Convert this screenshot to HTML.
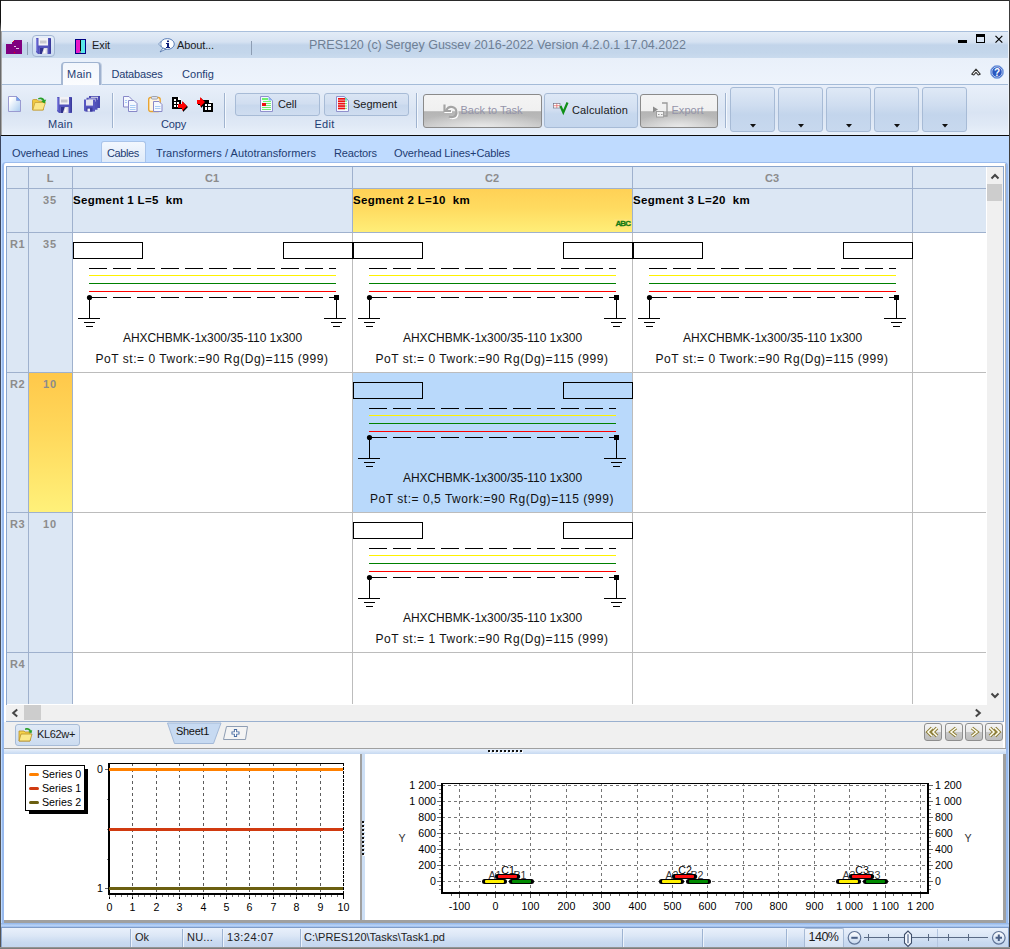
<!DOCTYPE html>
<html><head><meta charset="utf-8"><title>PRES120</title>
<style>
html,body{margin:0;padding:0;background:#fff;}
body{width:1010px;height:949px;position:relative;overflow:hidden;font-family:"Liberation Sans",sans-serif;}
.t{position:absolute;white-space:pre;font-family:"Liberation Sans",sans-serif;}
svg{position:absolute;overflow:visible;}
</style></head><body>
<div style="position:absolute;left:0px;top:0px;width:1010px;height:949px;background:#fff;"></div><div style="position:absolute;left:1px;top:31px;width:1008px;height:27px;background:linear-gradient(#e3ecf7 0%,#d6e2f2 38%,#c2d4ea 50%,#c3d6eb 80%,#cadbee 100%);border-top:1px solid #a9bfdc;box-sizing:border-box;"></div><div style="position:absolute;left:1px;top:58px;width:1008px;height:27px;background:linear-gradient(#e9f0fa,#eef4fc);"></div><div style="position:absolute;left:1px;top:85px;width:1008px;height:50px;background:linear-gradient(#e8effa 0%,#e1eaf6 30%,#d9e4f3 55%,#e0e9f6 80%,#e9f1fb 100%);"></div><div style="position:absolute;left:1px;top:84px;width:1008px;height:1px;background:#a4bbd8;"></div><div style="position:absolute;left:1px;top:135px;width:1008px;height:1px;background:#0c0c0c;"></div><div style="position:absolute;left:1px;top:136px;width:1008px;height:789px;background:#bfdbff;"></div><div style="position:absolute;left:0px;top:0px;width:1010px;height:1px;background:#2a2a2a;"></div><div style="position:absolute;left:0px;top:0px;width:1px;height:949px;background:linear-gradient(#111 0px,#111 22px,#6a6a6a 30px,#6a6a6a 135px,#3a4560 136px,#555 100%);"></div><div style="position:absolute;left:1px;top:31px;width:1px;height:104px;background:#a8a8a8;"></div><div style="position:absolute;left:1009px;top:0px;width:1px;height:949px;background:#3c3c3c;"></div><div style="position:absolute;left:1008px;top:31px;width:1px;height:104px;background:#eef3fa;"></div><svg style="left:6px;top:39px" width="17" height="16" viewBox="0 0 17 16" shape-rendering="crispEdges"><path d="M0 5h6V3l2-2h8v14H0z" fill="#800080"/><rect x="8" y="7" width="2" height="1" fill="#e8c8e8"/><rect x="10" y="9" width="3" height="1" fill="#e8c8e8"/><rect x="7" y="2" width="1" height="1" fill="#f00"/><rect x="8" y="13" width="1" height="1" fill="#f00"/></svg><div style="position:absolute;left:27px;top:42px;width:1px;height:13px;background:#8d9db3;"></div><div style="position:absolute;left:32px;top:35px;width:23px;height:22px;border:1px solid #a3b6d2;border-radius:4px;box-sizing:border-box;background:linear-gradient(#e6eefa,#c9daf0);"></div><svg style="left:36px;top:38px" width="15.0" height="16.0" viewBox="0 0 15 16"><path d="M0.800 0h13.400q.8 0 .8 .8v14.400q0 .8-.8 .8H2l-2-2V.8q0-.8 .8-.8z" fill="#5252bc"/><path d="M0 1h1.300v13l-1.300-1.300z" fill="#8484e0"/><path d="M13.500 0.500h1.500v15h-1.500z" fill="#3a3a9c"/><rect x="2.500" y="0" width="9.500" height="7.500" fill="#f2f2f6"/><rect x="4" y="2.500" width="6.500" height="3" fill="#c8c8d0"/><rect x="3.800" y="10" width="7.700" height="6" fill="#dcdce6"/><path d="M3.800 10h4l-2 6h-2z" fill="#30308c"/><path d="M8.800 10.800l-1.600 4.400h2.300v-4.400z" fill="#fff"/></svg><svg style="left:75px;top:39px" width="11" height="15" viewBox="0 0 11 15" shape-rendering="crispEdges"><rect x="0" y="0" width="11" height="15" fill="#000080"/><rect x="1" y="1" width="4" height="13" fill="#e818c8"/><rect x="6" y="1" width="4" height="13" fill="#58e8e8"/><rect x="5" y="1" width="1" height="13" fill="#000"/><path d="M3 14l3-3v3z" fill="#888"/></svg><span class="t" style="left:92.00px;top:38.00px;font-size:11px;line-height:15px;color:#1a1a1a;letter-spacing:-0.086px;">Exit</span><svg style="left:158px;top:38px" width="17" height="15" viewBox="0 0 17 15"><ellipse cx="9.300" cy="6" rx="7" ry="5.400" fill="#fff" stroke="#5a7eb8" stroke-width="1"/><path d="M5 10l-3 4 6-3z" fill="#fff" stroke="#4a6ea8" stroke-width="0.8"/><path d="M0.5 6l2.5-2.5v5z" fill="#dfe8f5" stroke="#4a6ea8" stroke-width="0.6"/><rect x="9" y="2.5" width="2" height="1.6" fill="#10207a"/><path d="M8 5h3v4h1v1H8V9h1V6H8z" fill="#10207a"/></svg><span class="t" style="left:177.00px;top:38.00px;font-size:11px;line-height:15px;color:#1a1a1a;letter-spacing:-0.115px;">About...</span><div style="position:absolute;left:251px;top:41px;width:1px;height:14px;background:#8d9db3;"></div><span class="t" style="left:309.00px;top:36.75px;font-size:12.5px;line-height:16.5px;color:#6e7f95;letter-spacing:-0.017px;">PRES120 (c) Sergey Gussev 2016-2022 Version 4.2.0.1 17.04.2022</span><div style="position:absolute;left:958px;top:40px;width:9px;height:3px;background:#000;"></div><div style="position:absolute;left:976px;top:34px;width:9px;height:9px;border:1px solid #000;border-top:3px solid #000;box-sizing:border-box;"></div><svg style="left:995px;top:35px" width="8" height="8" viewBox="0 0 8 8"><path d="M0.500 0.800l6.800 6.800M7.300 0.800l-6.800 6.800" stroke="#000" stroke-width="1.150"/></svg><div style="position:absolute;left:61px;top:62px;width:40px;height:23px;border:1px solid #9fb3d0;border-left:2px solid #a6b8d3;border-right:2px solid #a0b2cf;border-bottom:none;border-radius:4px 4px 0 0;box-sizing:border-box;background:linear-gradient(#f2f6fc,#fbfcfe);box-shadow:1px 0 0 #c5d2e5;"></div><span class="t" style="left:67.00px;top:66.50px;font-size:11px;line-height:15px;color:#1e3c72;letter-spacing:0.289px;">Main</span><span class="t" style="left:111.50px;top:66.50px;font-size:11px;line-height:15px;color:#1e3c72;letter-spacing:-0.177px;">Databases</span><span class="t" style="left:182.00px;top:66.50px;font-size:11px;line-height:15px;color:#1e3c72;letter-spacing:0.034px;">Config</span><svg style="left:971px;top:68px" width="10" height="8" viewBox="0 0 10 8"><path d="M0.8 6.2L5 1.2L9.2 6.2L7.2 7L5 4.3L2.8 7Z" fill="#fff" stroke="#333" stroke-width="1.1" stroke-linejoin="round"/></svg><svg style="left:990px;top:65px" width="14" height="14" viewBox="0 0 14 14"><circle cx="7" cy="7" r="6.5" fill="#2a58c0" stroke="#8fb0e8" stroke-width="1"/><circle cx="7" cy="7" r="5.2" fill="none" stroke="#e8f0ff" stroke-width="0.7"/><text x="7" y="10.6" font-size="10" font-weight="bold" text-anchor="middle" fill="#fff" font-family="Liberation Sans">?</text></svg><div style="position:absolute;left:112px;top:93px;width:1px;height:35px;background:#9fb3cf;box-shadow:1px 0 0 #f4f8fd;"></div><div style="position:absolute;left:224px;top:93px;width:1px;height:35px;background:#9fb3cf;box-shadow:1px 0 0 #f4f8fd;"></div><div style="position:absolute;left:416px;top:93px;width:1px;height:35px;background:#9fb3cf;box-shadow:1px 0 0 #f4f8fd;"></div><div style="position:absolute;left:725px;top:93px;width:1px;height:35px;background:#9fb3cf;box-shadow:1px 0 0 #f4f8fd;"></div><svg style="left:8px;top:96px" width="13" height="16" viewBox="0 0 13 16"><defs><linearGradient id="dg" x1="0" y1="0" x2="1" y2="1"><stop offset="0.2" stop-color="#ffffff"/><stop offset="1" stop-color="#a9cbf0"/></linearGradient></defs><path d="M0.5 0.5h8l4 4v11h-12z" fill="url(#dg)" stroke="#9a9ad0"/><path d="M8.5 0.5v4h4z" fill="#6aa8f0" stroke="#8a8ad0" stroke-width="0.6"/></svg><svg style="left:32px;top:96px" width="15" height="15" viewBox="0 0 15 15"><path d="M0.5 4.5q0-1 1-1h3.5l1.5 1.5h5v9h-11z" fill="#f0c840" stroke="#c09a30" stroke-width="0.8"/><path d="M0.8 14l2.2-7.5h10.5l-2.5 7.5z" fill="#fbe788" stroke="#c8a238" stroke-width="0.8"/><path d="M6 2.2c3-1.6 5.6-.6 6.6 1.8l1.6-.4-1.6 4-3.4-2.4 1.5-.5c-.9-1.5-2.6-1.9-4.2-1.2z" fill="#28a028"/></svg><svg style="left:57px;top:96.5px" width="15.0" height="16.0" viewBox="0 0 15 16"><path d="M0.800 0h13.400q.8 0 .8 .8v14.400q0 .8-.8 .8H2l-2-2V.8q0-.8 .8-.8z" fill="#5252bc"/><path d="M0 1h1.300v13l-1.300-1.300z" fill="#8484e0"/><path d="M13.500 0.500h1.500v15h-1.500z" fill="#3a3a9c"/><rect x="2.500" y="0" width="9.500" height="7.500" fill="#f2f2f6"/><rect x="4" y="2.500" width="6.500" height="3" fill="#c8c8d0"/><rect x="3.800" y="10" width="7.700" height="6" fill="#dcdce6"/><path d="M3.800 10h4l-2 6h-2z" fill="#30308c"/><path d="M8.800 10.800l-1.600 4.400h2.300v-4.400z" fill="#fff"/></svg><svg style="left:84px;top:96px" width="16" height="16" viewBox="0 0 16 16"><g transform="translate(5,0)"><path d="M0 0h11v12H1l-1-1z" fill="#4848b0"/><rect x="2" y="0.8" width="7" height="3" fill="#e4e4ee"/></g><g transform="translate(2.5,1.8)"><path d="M0 0h11v12H1l-1-1z" fill="#5050b8"/><rect x="2" y="0.8" width="7" height="3" fill="#e4e4ee"/></g><g transform="translate(0,3.6)"><path d="M0 0h11v12H1l-1-1z" fill="#5656c0"/><rect x="2" y="0" width="7" height="6" fill="#e4e4ee"/><rect x="2.5" y="8" width="6" height="4" fill="#38389a"/><rect x="3.5" y="9" width="2.5" height="3" fill="#f0f0f8"/></g></svg><span class="t" style="left:48.00px;top:117.00px;font-size:11px;line-height:15px;color:#1e3c72;letter-spacing:0.289px;">Main</span><svg style="left:123px;top:96px" width="15" height="16" viewBox="0 0 15 16"><path d="M0.5 0.5h5.5l3 3v7.5h-8.500z" fill="#f4f8ff" stroke="#8888c8"/><path d="M5.5 4.500h5.500l3 3v8h-8.500z" fill="#f4f8ff" stroke="#8888c8"/><path d="M7 9.5h5.500M7 11.500h5.500M7 13.500h5.500" stroke="#a8ccf4" stroke-width="1.2"/><path d="M2 4.500h2M2 6.500h2" stroke="#a8ccf4" stroke-width="1.2"/></svg><svg style="left:148px;top:96px" width="15" height="16" viewBox="0 0 15 16"><rect x="0.7" y="1.500" width="11.500" height="14" rx="2" fill="#fff6e0" stroke="#e8a432" stroke-width="1.4"/><rect x="3.500" y="0.5" width="6" height="2.600" rx="1" fill="#e0e4ee" stroke="#8a93a8" stroke-width="0.8"/><path d="M5.500 5.500h5.500l3 3v7h-8.500z" fill="#f4f8ff" stroke="#8888c8"/><path d="M7 10.500h5.500M7 12.500h5.500" stroke="#a8ccf4" stroke-width="1.2"/></svg><svg style="left:172px;top:97px" width="17" height="15" viewBox="0 0 17 15" shape-rendering="crispEdges"><path d="M0 0h6l3 3v9H0z" fill="#000"/><path d="M6 0v3h3" fill="#fff"/><rect x="2" y="2" width="2" height="2" fill="#fff"/><rect x="2" y="5" width="2" height="2" fill="#fff"/><rect x="5" y="5" width="2" height="2" fill="#fff"/><rect x="2" y="8" width="2" height="2" fill="#fff"/><rect x="5" y="8" width="2" height="2" fill="#fff"/><path d="M7 8h4V5l5 5-5 5v-3H7z" fill="#000" shape-rendering="auto"/><path d="M6 7h4V4l5 5-5 5v-3H6z" fill="#ff0000" shape-rendering="auto"/></svg><svg style="left:197px;top:97px" width="17" height="15" viewBox="0 0 17 15" shape-rendering="crispEdges"><path d="M1 4h3V1l5 5-5 5V8H1z" fill="#000" shape-rendering="auto"/><path d="M6 3h6l4 3.500V15H6z" fill="#000"/><path d="M0 3h3V0l5 5-5 5V7H0z" fill="#ff0000" shape-rendering="auto"/><path d="M12 3v3h3" fill="#fff"/><rect x="8" y="7" width="2" height="2" fill="#fff"/><rect x="11" y="7" width="3" height="2" fill="#fff"/><rect x="8" y="10" width="2" height="3" fill="#fff"/><rect x="11" y="10" width="3" height="3" fill="#fff"/></svg><span class="t" style="left:161.00px;top:117.00px;font-size:11px;line-height:15px;color:#1e3c72;letter-spacing:-0.172px;">Copy</span><div style="position:absolute;left:235px;top:93px;width:85px;height:23px;border:1px solid #a7bbd6;border-radius:3px;box-sizing:border-box;background:linear-gradient(#dae5f4 0%,#d1def0 45%,#c8d8ed 55%,#cfddf0 100%);"></div><div style="position:absolute;left:324px;top:93px;width:85px;height:23px;border:1px solid #a7bbd6;border-radius:3px;box-sizing:border-box;background:linear-gradient(#dae5f4 0%,#d1def0 45%,#c8d8ed 55%,#cfddf0 100%);"></div><svg style="left:260px;top:96px" width="13" height="16" viewBox="0 0 13 16" shape-rendering="crispEdges"><path d="M0.5 0.5h8l4 4v11h-12z" fill="#f4f8ff" stroke="#9090cc" shape-rendering="auto"/><path d="M8.5 0.5v4h4z" fill="#8ab8f0" shape-rendering="auto"/><rect x="2" y="2" width="6" height="2" fill="#70f070"/><rect x="3" y="5" width="8" height="1" fill="#70f070"/><rect x="2" y="7" width="4" height="3" fill="#ee1010"/><rect x="6" y="7" width="5" height="1" fill="#70f070"/><rect x="6" y="9" width="5" height="1" fill="#70f070"/><rect x="2" y="11" width="9" height="1" fill="#70f070"/><rect x="2" y="13" width="9" height="1" fill="#70f070"/></svg><span class="t" style="left:278.00px;top:96.50px;font-size:11px;line-height:15px;color:#1a1a1a;letter-spacing:-0.113px;">Cell</span><svg style="left:336px;top:96px" width="13" height="16" viewBox="0 0 13 16" shape-rendering="crispEdges"><path d="M0.5 0.5h8l4 4v11h-12z" fill="#f4f8ff" stroke="#9090cc" shape-rendering="auto"/><path d="M8.5 0.5v4h4z" fill="#8ab8f0" shape-rendering="auto"/><rect x="2" y="2.0" width="7" height="1.700" fill="#ee1010" shape-rendering="auto"/><rect x="9" y="2.3" width="2" height="1" fill="#70f070" shape-rendering="auto"/><rect x="2" y="4.4" width="7" height="1.700" fill="#ee1010" shape-rendering="auto"/><rect x="9" y="4.699999999999999" width="2" height="1" fill="#70f070" shape-rendering="auto"/><rect x="2" y="6.8" width="7" height="1.700" fill="#ee1010" shape-rendering="auto"/><rect x="9" y="7.1" width="2" height="1" fill="#70f070" shape-rendering="auto"/><rect x="2" y="9.2" width="7" height="1.700" fill="#ee1010" shape-rendering="auto"/><rect x="9" y="9.5" width="2" height="1" fill="#70f070" shape-rendering="auto"/><rect x="2" y="11.6" width="7" height="1.700" fill="#ee1010" shape-rendering="auto"/><rect x="9" y="11.899999999999999" width="2" height="1" fill="#70f070" shape-rendering="auto"/></svg><span class="t" style="left:353.00px;top:96.50px;font-size:11px;line-height:15px;color:#1a1a1a;">Segment</span><span class="t" style="left:314.50px;top:117.00px;font-size:11px;line-height:15px;color:#1e3c72;letter-spacing:0.258px;">Edit</span><div style="position:absolute;left:423px;top:94px;width:119px;height:34px;border:1px solid #8a8a8a;border-radius:3px;box-sizing:border-box;background:radial-gradient(ellipse 60% 45% at 50% 100%,rgba(235,235,235,.95),rgba(235,235,235,0) 100%),linear-gradient(#f4f4f4 0%,#f0f0f0 50%,#b4b4b4 52%,#bcbcbc 80%,#c6c6c6 100%);"></div><div style="position:absolute;left:544px;top:93px;width:94px;height:35px;border:1px solid #a7bbd6;border-radius:3px;box-sizing:border-box;background:linear-gradient(#dde8f6 0%,#d2dff1 48%,#c7d8ee 60%,#c4d6ed 100%);"></div><div style="position:absolute;left:640px;top:94px;width:78px;height:34px;border:1px solid #8a8a8a;border-radius:3px;box-sizing:border-box;background:radial-gradient(ellipse 60% 45% at 50% 100%,rgba(235,235,235,.95),rgba(235,235,235,0) 100%),linear-gradient(#f4f4f4 0%,#f0f0f0 50%,#b4b4b4 52%,#bcbcbc 80%,#c6c6c6 100%);"></div><svg style="left:443px;top:104px" width="16" height="15" viewBox="0 0 16 15"><g transform="translate(1,1)"><path d="M1.500 0.500v6.500h6.500" fill="none" stroke="#fff" stroke-width="2.2"/><path d="M3 6.500c3-6 11-4 10.500 2.500-.5 4-4.500 5-7.500 3.500" fill="none" stroke="#fff" stroke-width="2.200"/></g><path d="M1.500 0.500v6.500h6.500" fill="none" stroke="#a4a4a4" stroke-width="2.200"/><path d="M3 6.500c3-6 11-4 10.500 2.500-.5 4-4.500 5-7.500 3.500" fill="none" stroke="#a4a4a4" stroke-width="2.200"/></svg><span class="t" style="left:460.50px;top:102.50px;font-size:11px;line-height:15px;color:#9494aa;letter-spacing:-0.014px;">Back to Task</span><svg style="left:553px;top:102px" width="17" height="12" viewBox="0 0 17 12"><rect x="0.500" y="1.500" width="6.500" height="4.500" fill="#fff" stroke="#667" stroke-width="0.600"/><path d="M0.500 3.700h6.500M3.800 1.500v4.500" stroke="#d44" stroke-width="0.600"/><path d="M7.500 4l2.800 6.500L14.500 0.500" fill="none" stroke="#109018" stroke-width="2.200"/></svg><span class="t" style="left:572.00px;top:102.50px;font-size:11px;line-height:15px;color:#1a1a1a;letter-spacing:0.143px;">Calculation</span><svg style="left:652px;top:102px" width="17" height="16" viewBox="0 0 17 16"><path d="M10 1h5v13h-3" fill="none" stroke="#9a9a9a" stroke-width="1.300"/><path d="M1 4.500l5 3-5 3z" fill="#8c8c8c"/><rect x="4.500" y="9.500" width="7" height="5.500" fill="#f2f2f2" stroke="#9a9a9a" stroke-width="0.900"/><path d="M6 12.500h1.500M9 12.500h1.500" stroke="#9a9a9a"/></svg><span class="t" style="left:671.50px;top:102.50px;font-size:11px;line-height:15px;color:#9494aa;letter-spacing:0.034px;">Export</span><div style="position:absolute;left:730px;top:87px;width:45px;height:45px;border:1px solid #a7bbd6;border-radius:3px;box-sizing:border-box;background:linear-gradient(#dfe9f6 0%,#cfddf0 40%,#c3d5ec 62%,#c7d8ee 100%);"></div><svg style="left:749.5px;top:123.500px" width="6" height="3.500" viewBox="0 0 6 3.500"><path d="M0 0h6L3 3.500z" fill="#111"/></svg><div style="position:absolute;left:778px;top:87px;width:45px;height:45px;border:1px solid #a7bbd6;border-radius:3px;box-sizing:border-box;background:linear-gradient(#dfe9f6 0%,#cfddf0 40%,#c3d5ec 62%,#c7d8ee 100%);"></div><svg style="left:797.5px;top:123.500px" width="6" height="3.500" viewBox="0 0 6 3.500"><path d="M0 0h6L3 3.500z" fill="#111"/></svg><div style="position:absolute;left:826px;top:87px;width:45px;height:45px;border:1px solid #a7bbd6;border-radius:3px;box-sizing:border-box;background:linear-gradient(#dfe9f6 0%,#cfddf0 40%,#c3d5ec 62%,#c7d8ee 100%);"></div><svg style="left:845.5px;top:123.500px" width="6" height="3.500" viewBox="0 0 6 3.500"><path d="M0 0h6L3 3.500z" fill="#111"/></svg><div style="position:absolute;left:874px;top:87px;width:45px;height:45px;border:1px solid #a7bbd6;border-radius:3px;box-sizing:border-box;background:linear-gradient(#dfe9f6 0%,#cfddf0 40%,#c3d5ec 62%,#c7d8ee 100%);"></div><svg style="left:893.5px;top:123.500px" width="6" height="3.500" viewBox="0 0 6 3.500"><path d="M0 0h6L3 3.500z" fill="#111"/></svg><div style="position:absolute;left:922px;top:87px;width:45px;height:45px;border:1px solid #a7bbd6;border-radius:3px;box-sizing:border-box;background:linear-gradient(#dfe9f6 0%,#cfddf0 40%,#c3d5ec 62%,#c7d8ee 100%);"></div><svg style="left:941.5px;top:123.500px" width="6" height="3.500" viewBox="0 0 6 3.500"><path d="M0 0h6L3 3.500z" fill="#111"/></svg><div style="position:absolute;left:101px;top:141px;width:45px;height:23px;border:1px solid #a9c4ea;border-bottom:none;border-radius:3px 3px 0 0;box-sizing:border-box;background:linear-gradient(#f2f7fe,#dde9f8);"></div><span class="t" style="left:12.00px;top:145.50px;font-size:11px;line-height:15px;color:#1e3c72;letter-spacing:-0.119px;">Overhead Lines</span><span class="t" style="left:107.00px;top:145.50px;font-size:11px;line-height:15px;color:#1e3c72;letter-spacing:-0.375px;">Cables</span><span class="t" style="left:156.00px;top:145.50px;font-size:11px;line-height:15px;color:#1e3c72;letter-spacing:0.067px;">Transformers / Autotransformers</span><span class="t" style="left:334.00px;top:145.50px;font-size:11px;line-height:15px;color:#1e3c72;letter-spacing:-0.129px;">Reactors</span><span class="t" style="left:394.00px;top:145.50px;font-size:11px;line-height:15px;color:#1e3c72;letter-spacing:-0.111px;">Overhead Lines+Cables</span><div style="position:absolute;left:2px;top:162px;width:1006px;height:761px;background:#fff;border-radius:4px 4px 0 0;border:1px solid #9cbdee;border-left:2px solid #98baee;border-right:2px solid #98baee;border-bottom:none;box-sizing:border-box;"></div><div style="position:absolute;left:1003px;top:166px;width:1px;height:556px;background:#8aa5cc;"></div><div style="position:absolute;left:1005px;top:164px;width:1px;height:758px;background:#b4b4b4;"></div><div style="position:absolute;left:6px;top:166px;width:981px;height:539px;background:#fff;overflow:hidden;"></div><div style="position:absolute;left:6px;top:166px;width:980px;height:66px;background:#dce7f4;"></div><div style="position:absolute;left:6px;top:232px;width:66px;height:472px;background:#dce7f4;"></div><div style="position:absolute;left:353px;top:189px;width:279px;height:43px;background:linear-gradient(#ffd156 0%,#ffdb60 45%,#ffee78 100%);"></div><div style="position:absolute;left:29px;top:373px;width:43px;height:139px;background:linear-gradient(#ffc84a 0%,#ffd75a 40%,#fff17a 100%);"></div><div style="position:absolute;left:353px;top:373px;width:279px;height:139px;background:#b9d9fb;"></div><div style="position:absolute;left:6px;top:166px;width:981px;height:1px;background:#9fb1cd;"></div><div style="position:absolute;left:6px;top:188px;width:980px;height:1px;background:#9fb1cd;"></div><div style="position:absolute;left:6px;top:232px;width:980px;height:1px;background:#9fb1cd;"></div><div style="position:absolute;left:6px;top:166px;width:1px;height:538px;background:#9fb1cd;"></div><div style="position:absolute;left:28px;top:166px;width:1px;height:538px;background:#9fb1cd;"></div><div style="position:absolute;left:72px;top:166px;width:1px;height:538px;background:#9fb1cd;"></div><div style="position:absolute;left:352px;top:166px;width:1px;height:66px;background:#9fb1cd;"></div><div style="position:absolute;left:352px;top:233px;width:1px;height:471px;background:#bcbcbc;"></div><div style="position:absolute;left:632px;top:166px;width:1px;height:66px;background:#9fb1cd;"></div><div style="position:absolute;left:632px;top:233px;width:1px;height:471px;background:#bcbcbc;"></div><div style="position:absolute;left:912px;top:166px;width:1px;height:66px;background:#9fb1cd;"></div><div style="position:absolute;left:912px;top:233px;width:1px;height:471px;background:#bcbcbc;"></div><div style="position:absolute;left:6px;top:372px;width:66px;height:1px;background:#9fb1cd;"></div><div style="position:absolute;left:73px;top:372px;width:913px;height:1px;background:#bcbcbc;"></div><div style="position:absolute;left:6px;top:512px;width:66px;height:1px;background:#9fb1cd;"></div><div style="position:absolute;left:73px;top:512px;width:913px;height:1px;background:#bcbcbc;"></div><div style="position:absolute;left:6px;top:652px;width:66px;height:1px;background:#9fb1cd;"></div><div style="position:absolute;left:73px;top:652px;width:913px;height:1px;background:#bcbcbc;"></div><div style="position:absolute;left:6px;top:166px;width:998px;height:1px;background:#8aa5cc;"></div><div style="position:absolute;left:6px;top:166px;width:1px;height:556px;background:#8aa5cc;"></div><span class="t" style="left:46.63px;top:170.50px;font-size:11px;line-height:15px;color:#8c8c8c;font-weight:bold;">L</span><span class="t" style="left:204.97px;top:170.50px;font-size:11px;line-height:15px;color:#8c8c8c;font-weight:bold;">C1</span><span class="t" style="left:484.97px;top:170.50px;font-size:11px;line-height:15px;color:#8c8c8c;font-weight:bold;">C2</span><span class="t" style="left:764.97px;top:170.50px;font-size:11px;line-height:15px;color:#8c8c8c;font-weight:bold;">C3</span><span class="t" style="left:43.00px;top:192.50px;font-size:11px;line-height:15px;color:#8c8c8c;letter-spacing:0.875px;font-weight:bold;">35</span><span class="t" style="left:43.00px;top:236.50px;font-size:11px;line-height:15px;color:#8c8c8c;letter-spacing:0.875px;font-weight:bold;">35</span><span class="t" style="left:43.00px;top:376.50px;font-size:11px;line-height:15px;color:#8c8c8c;letter-spacing:0.875px;font-weight:bold;">10</span><span class="t" style="left:43.00px;top:516.50px;font-size:11px;line-height:15px;color:#8c8c8c;letter-spacing:0.875px;font-weight:bold;">10</span><span class="t" style="left:10.00px;top:236.50px;font-size:11px;line-height:15px;color:#8c8c8c;letter-spacing:0.469px;font-weight:bold;">R1</span><span class="t" style="left:10.00px;top:376.50px;font-size:11px;line-height:15px;color:#8c8c8c;letter-spacing:0.469px;font-weight:bold;">R2</span><span class="t" style="left:10.00px;top:516.50px;font-size:11px;line-height:15px;color:#8c8c8c;letter-spacing:0.469px;font-weight:bold;">R3</span><span class="t" style="left:10.00px;top:656.50px;font-size:11px;line-height:15px;color:#8c8c8c;letter-spacing:0.469px;font-weight:bold;">R4</span><span class="t" style="left:73.00px;top:193.25px;font-size:11.5px;line-height:15.5px;color:#000;letter-spacing:0.324px;font-weight:bold;">Segment 1 L=5  km</span><span class="t" style="left:353.00px;top:193.25px;font-size:11.5px;line-height:15.5px;color:#000;letter-spacing:0.339px;font-weight:bold;">Segment 2 L=10  km</span><span class="t" style="left:633.00px;top:193.25px;font-size:11.5px;line-height:15.5px;color:#000;letter-spacing:0.339px;font-weight:bold;">Segment 3 L=20  km</span><div style="position:absolute;left:614px;top:219px;width:17px;height:9px;background:rgba(255,226,122,.6);"></div><span class="t" style="left:615.50px;top:217.50px;font-size:8px;line-height:12px;color:#137a13;letter-spacing:-0.948px;font-weight:bold;-webkit-text-stroke:0.300px #137a13;">ABC</span><svg style="left:72px;top:232px" width="282" height="140" viewBox="0 0 282 140" shape-rendering="crispEdges"><rect x="1.5" y="10.5" width="69" height="16" fill="none" stroke="#000"/><rect x="211.5" y="10.5" width="69" height="16" fill="none" stroke="#000"/><path d="M17 36.5H264" stroke="#000" stroke-dasharray="18 6"/><path d="M17 43.5H264" stroke="#fff200"/><path d="M17 51.5H264" stroke="#008000"/><path d="M17 59.5H264" stroke="#ff0000"/><path d="M17 65.5H264" stroke="#000" stroke-dasharray="18 6"/><path d="M17.5 65V87M6 86.5H28M12 90.5H23M14 94.5H21" stroke="#000" fill="none"/><path d="M264.5 65V87M252 86.5H274M259 90.5H270M261 94.5H268" stroke="#000" fill="none"/><circle cx="17.5" cy="65.5" r="2.6" fill="#000" shape-rendering="auto"/><rect x="262" y="63" width="5" height="5" fill="#000"/></svg><span class="t" style="left:123.00px;top:329.70px;font-size:12px;line-height:16px;color:#111;letter-spacing:-0.057px;">AHXCHBMK-1x300/35-110 1x300</span><span class="t" style="left:95.50px;top:350.50px;font-size:12px;line-height:16px;color:#111;letter-spacing:0.537px;">PoT st:= 0 Twork:=90 Rg(Dg)=115 (999)</span><svg style="left:352px;top:232px" width="282" height="140" viewBox="0 0 282 140" shape-rendering="crispEdges"><rect x="1.5" y="10.5" width="69" height="16" fill="none" stroke="#000"/><rect x="211.5" y="10.5" width="69" height="16" fill="none" stroke="#000"/><path d="M17 36.5H264" stroke="#000" stroke-dasharray="18 6"/><path d="M17 43.5H264" stroke="#fff200"/><path d="M17 51.5H264" stroke="#008000"/><path d="M17 59.5H264" stroke="#ff0000"/><path d="M17 65.5H264" stroke="#000" stroke-dasharray="18 6"/><path d="M17.5 65V87M6 86.5H28M12 90.5H23M14 94.5H21" stroke="#000" fill="none"/><path d="M264.5 65V87M252 86.5H274M259 90.5H270M261 94.5H268" stroke="#000" fill="none"/><circle cx="17.5" cy="65.5" r="2.6" fill="#000" shape-rendering="auto"/><rect x="262" y="63" width="5" height="5" fill="#000"/></svg><span class="t" style="left:403.00px;top:329.70px;font-size:12px;line-height:16px;color:#111;letter-spacing:-0.057px;">AHXCHBMK-1x300/35-110 1x300</span><span class="t" style="left:375.50px;top:350.50px;font-size:12px;line-height:16px;color:#111;letter-spacing:0.537px;">PoT st:= 0 Twork:=90 Rg(Dg)=115 (999)</span><svg style="left:632px;top:232px" width="282" height="140" viewBox="0 0 282 140" shape-rendering="crispEdges"><rect x="1.5" y="10.5" width="69" height="16" fill="none" stroke="#000"/><rect x="211.5" y="10.5" width="69" height="16" fill="none" stroke="#000"/><path d="M17 36.5H264" stroke="#000" stroke-dasharray="18 6"/><path d="M17 43.5H264" stroke="#fff200"/><path d="M17 51.5H264" stroke="#008000"/><path d="M17 59.5H264" stroke="#ff0000"/><path d="M17 65.5H264" stroke="#000" stroke-dasharray="18 6"/><path d="M17.5 65V87M6 86.5H28M12 90.5H23M14 94.5H21" stroke="#000" fill="none"/><path d="M264.5 65V87M252 86.5H274M259 90.5H270M261 94.5H268" stroke="#000" fill="none"/><circle cx="17.5" cy="65.5" r="2.6" fill="#000" shape-rendering="auto"/><rect x="262" y="63" width="5" height="5" fill="#000"/></svg><span class="t" style="left:683.00px;top:329.70px;font-size:12px;line-height:16px;color:#111;letter-spacing:-0.057px;">AHXCHBMK-1x300/35-110 1x300</span><span class="t" style="left:655.50px;top:350.50px;font-size:12px;line-height:16px;color:#111;letter-spacing:0.537px;">PoT st:= 0 Twork:=90 Rg(Dg)=115 (999)</span><svg style="left:352px;top:372px" width="282" height="140" viewBox="0 0 282 140" shape-rendering="crispEdges"><rect x="1.5" y="10.5" width="69" height="16" fill="none" stroke="#000"/><rect x="211.5" y="10.5" width="69" height="16" fill="none" stroke="#000"/><path d="M17 36.5H264" stroke="#000" stroke-dasharray="18 6"/><path d="M17 43.5H264" stroke="#fff200"/><path d="M17 51.5H264" stroke="#008000"/><path d="M17 59.5H264" stroke="#ff0000"/><path d="M17 65.5H264" stroke="#000" stroke-dasharray="18 6"/><path d="M17.5 65V87M6 86.5H28M12 90.5H23M14 94.5H21" stroke="#000" fill="none"/><path d="M264.5 65V87M252 86.5H274M259 90.5H270M261 94.5H268" stroke="#000" fill="none"/><circle cx="17.5" cy="65.5" r="2.6" fill="#000" shape-rendering="auto"/><rect x="262" y="63" width="5" height="5" fill="#000"/></svg><span class="t" style="left:403.00px;top:469.70px;font-size:12px;line-height:16px;color:#111;letter-spacing:-0.057px;">AHXCHBMK-1x300/35-110 1x300</span><span class="t" style="left:370.00px;top:490.50px;font-size:12px;line-height:16px;color:#111;letter-spacing:0.535px;">PoT st:= 0,5 Twork:=90 Rg(Dg)=115 (999)</span><svg style="left:352px;top:512px" width="282" height="140" viewBox="0 0 282 140" shape-rendering="crispEdges"><rect x="1.5" y="10.5" width="69" height="16" fill="none" stroke="#000"/><rect x="211.5" y="10.5" width="69" height="16" fill="none" stroke="#000"/><path d="M17 36.5H264" stroke="#000" stroke-dasharray="18 6"/><path d="M17 43.5H264" stroke="#fff200"/><path d="M17 51.5H264" stroke="#008000"/><path d="M17 59.5H264" stroke="#ff0000"/><path d="M17 65.5H264" stroke="#000" stroke-dasharray="18 6"/><path d="M17.5 65V87M6 86.5H28M12 90.5H23M14 94.5H21" stroke="#000" fill="none"/><path d="M264.5 65V87M252 86.5H274M259 90.5H270M261 94.5H268" stroke="#000" fill="none"/><circle cx="17.5" cy="65.5" r="2.6" fill="#000" shape-rendering="auto"/><rect x="262" y="63" width="5" height="5" fill="#000"/></svg><span class="t" style="left:403.00px;top:609.70px;font-size:12px;line-height:16px;color:#111;letter-spacing:-0.057px;">AHXCHBMK-1x300/35-110 1x300</span><span class="t" style="left:375.50px;top:630.50px;font-size:12px;line-height:16px;color:#111;letter-spacing:0.537px;">PoT st:= 1 Twork:=90 Rg(Dg)=115 (999)</span><div style="position:absolute;left:987px;top:167px;width:16px;height:538px;background:#f0f0f0;"></div><div style="position:absolute;left:987px;top:184px;width:15px;height:17px;background:#cdcdcd;"></div><svg style="left:991px;top:174px" width="8" height="5" viewBox="0 0 8 5"><path d="M0.5 4.5L4 1L7.5 4.5" fill="none" stroke="#454545" stroke-width="2"/></svg><svg style="left:991px;top:693px" width="8" height="5" viewBox="0 0 8 5"><path d="M0.5 0.5L4 4L7.5 0.5" fill="none" stroke="#454545" stroke-width="2"/></svg><div style="position:absolute;left:6px;top:705px;width:997px;height:16px;background:#f0f0f0;"></div><div style="position:absolute;left:24px;top:705px;width:17px;height:15px;background:#cdcdcd;"></div><svg style="left:12px;top:709px" width="6" height="8" viewBox="0 0 6 8"><path d="M5.200 0.500L1.200 4L5.200 7.500" fill="none" stroke="#454545" stroke-width="2"/></svg><svg style="left:975px;top:709px" width="6" height="8" viewBox="0 0 6 8"><path d="M0.800 0.500L4.800 4L0.800 7.500" fill="none" stroke="#454545" stroke-width="2"/></svg><div style="position:absolute;left:6px;top:721px;width:997px;height:1px;background:#9ab0cf;"></div><div style="position:absolute;left:4px;top:722px;width:999px;height:26px;background:#f0f0f0;"></div><div style="position:absolute;left:15px;top:724px;width:65px;height:22px;border:1px solid #a7bbd6;border-radius:3px;box-sizing:border-box;background:linear-gradient(#dfe9f6,#ccdcf0);"></div><svg style="left:18px;top:727px" width="15" height="15" viewBox="0 0 15 15"><path d="M1 4h5l1 1h5v9H1z" fill="#f5d24a" stroke="#b8902a" stroke-width="0.8"/><path d="M1 14l2-7h11l-2 7z" fill="#fbe98a" stroke="#b8902a" stroke-width="0.8"/><path d="M7 1.5c3-1 5 0 6 2l1.2-.6-.7 3.4-3.2-1.3 1.2-.7c-1-1.4-2.5-1.8-4.5-1.2z" fill="#2ca02c"/></svg><span class="t" style="left:37.00px;top:727.00px;font-size:11px;line-height:15px;color:#1a1a1a;letter-spacing:-0.344px;">KL62w+</span><svg style="left:167px;top:723px" width="55" height="21" viewBox="0 0 55 21"><path d="M0.5 0L7.5 20.500H46.500L54 0z" fill="#c7daf2" stroke="#a3b9d8"/></svg><span class="t" style="left:176.00px;top:724.00px;font-size:11px;line-height:15px;color:#111;letter-spacing:-0.312px;">Sheet1</span><svg style="left:223px;top:726px" width="25" height="14" viewBox="0 0 25 14"><path d="M3.5 0.5H24.5L22.5 13.5H0.5z" fill="#f4f4f4" stroke="#8e9db3"/><path d="M12.500 3v8M8.500 7h8" stroke="#466aa0" stroke-width="3.200"/><path d="M12.500 4v6M9.500 7h6" stroke="#fff" stroke-width="1.300"/></svg><div style="position:absolute;left:924px;top:723px;width:18px;height:18px;border:1px solid #8e8e8e;border-radius:3px;box-sizing:border-box;background:linear-gradient(#f4f4f4 0%,#e9e9e9 48%,#c9c9c9 52%,#bdbdbd 100%);"></div><svg style="left:924px;top:723px" width="18" height="18" viewBox="0 0 18 18"><path d="M8 5L4 9L8 13M13 5L9 9L13 13" fill="none" stroke="#8a7a30" stroke-width="3.400"/><path d="M8 5L4 9L8 13M13 5L9 9L13 13" fill="none" stroke="#fffef0" stroke-width="1.600"/></svg><div style="position:absolute;left:945px;top:723px;width:18px;height:18px;border:1px solid #8e8e8e;border-radius:3px;box-sizing:border-box;background:linear-gradient(#f4f4f4 0%,#e9e9e9 48%,#c9c9c9 52%,#bdbdbd 100%);"></div><svg style="left:945px;top:723px" width="18" height="18" viewBox="0 0 18 18"><path d="M11 5L6 9L11 13" fill="none" stroke="#8a7a30" stroke-width="3.400"/><path d="M11 5L6 9L11 13" fill="none" stroke="#fffef0" stroke-width="1.600"/></svg><div style="position:absolute;left:965px;top:723px;width:18px;height:18px;border:1px solid #8e8e8e;border-radius:3px;box-sizing:border-box;background:linear-gradient(#f4f4f4 0%,#e9e9e9 48%,#c9c9c9 52%,#bdbdbd 100%);"></div><svg style="left:965px;top:723px" width="18" height="18" viewBox="0 0 18 18"><path d="M7 5L12 9L7 13" fill="none" stroke="#8a7a30" stroke-width="3.400"/><path d="M7 5L12 9L7 13" fill="none" stroke="#fffef0" stroke-width="1.600"/></svg><div style="position:absolute;left:985px;top:723px;width:18px;height:18px;border:1px solid #8e8e8e;border-radius:3px;box-sizing:border-box;background:linear-gradient(#f4f4f4 0%,#e9e9e9 48%,#c9c9c9 52%,#bdbdbd 100%);"></div><svg style="left:985px;top:723px" width="18" height="18" viewBox="0 0 18 18"><path d="M5 5L9 9L5 13M10 5L14 9L10 13" fill="none" stroke="#8a7a30" stroke-width="3.400"/><path d="M5 5L9 9L5 13M10 5L14 9L10 13" fill="none" stroke="#fffef0" stroke-width="1.600"/></svg><div style="position:absolute;left:4px;top:748px;width:1002px;height:1px;background:#a0a0a0;"></div><div style="position:absolute;left:4px;top:749px;width:1002px;height:5px;background:linear-gradient(#e9f1fc,#c6d9f1);"></div><div style="position:absolute;left:489px;top:751px;width:2px;height:2px;background:#fff;"></div><div style="position:absolute;left:488px;top:750px;width:2px;height:2px;background:#111;"></div><div style="position:absolute;left:493px;top:751px;width:2px;height:2px;background:#fff;"></div><div style="position:absolute;left:492px;top:750px;width:2px;height:2px;background:#111;"></div><div style="position:absolute;left:497px;top:751px;width:2px;height:2px;background:#fff;"></div><div style="position:absolute;left:496px;top:750px;width:2px;height:2px;background:#111;"></div><div style="position:absolute;left:501px;top:751px;width:2px;height:2px;background:#fff;"></div><div style="position:absolute;left:500px;top:750px;width:2px;height:2px;background:#111;"></div><div style="position:absolute;left:505px;top:751px;width:2px;height:2px;background:#fff;"></div><div style="position:absolute;left:504px;top:750px;width:2px;height:2px;background:#111;"></div><div style="position:absolute;left:509px;top:751px;width:2px;height:2px;background:#fff;"></div><div style="position:absolute;left:508px;top:750px;width:2px;height:2px;background:#111;"></div><div style="position:absolute;left:513px;top:751px;width:2px;height:2px;background:#fff;"></div><div style="position:absolute;left:512px;top:750px;width:2px;height:2px;background:#111;"></div><div style="position:absolute;left:517px;top:751px;width:2px;height:2px;background:#fff;"></div><div style="position:absolute;left:516px;top:750px;width:2px;height:2px;background:#111;"></div><div style="position:absolute;left:521px;top:751px;width:2px;height:2px;background:#fff;"></div><div style="position:absolute;left:520px;top:750px;width:2px;height:2px;background:#111;"></div><div style="position:absolute;left:4px;top:754px;width:356px;height:166px;background:#fff;"></div><div style="position:absolute;left:365px;top:754px;width:638px;height:166px;background:#fff;"></div><div style="position:absolute;left:360px;top:754px;width:2px;height:169px;background:#a0a0a0;"></div><div style="position:absolute;left:362px;top:754px;width:3px;height:169px;background:#cddff5;"></div><div style="position:absolute;left:363px;top:822px;width:2px;height:2px;background:#fff;"></div><div style="position:absolute;left:362px;top:821px;width:2px;height:2px;background:#111;"></div><div style="position:absolute;left:363px;top:826px;width:2px;height:2px;background:#fff;"></div><div style="position:absolute;left:362px;top:825px;width:2px;height:2px;background:#111;"></div><div style="position:absolute;left:363px;top:830px;width:2px;height:2px;background:#fff;"></div><div style="position:absolute;left:362px;top:829px;width:2px;height:2px;background:#111;"></div><div style="position:absolute;left:363px;top:834px;width:2px;height:2px;background:#fff;"></div><div style="position:absolute;left:362px;top:833px;width:2px;height:2px;background:#111;"></div><div style="position:absolute;left:363px;top:838px;width:2px;height:2px;background:#fff;"></div><div style="position:absolute;left:362px;top:837px;width:2px;height:2px;background:#111;"></div><div style="position:absolute;left:363px;top:842px;width:2px;height:2px;background:#fff;"></div><div style="position:absolute;left:362px;top:841px;width:2px;height:2px;background:#111;"></div><div style="position:absolute;left:363px;top:846px;width:2px;height:2px;background:#fff;"></div><div style="position:absolute;left:362px;top:845px;width:2px;height:2px;background:#111;"></div><div style="position:absolute;left:363px;top:850px;width:2px;height:2px;background:#fff;"></div><div style="position:absolute;left:362px;top:849px;width:2px;height:2px;background:#111;"></div><div style="position:absolute;left:363px;top:854px;width:2px;height:2px;background:#fff;"></div><div style="position:absolute;left:362px;top:853px;width:2px;height:2px;background:#111;"></div><div style="position:absolute;left:4px;top:920px;width:1002px;height:3px;background:#a0a0a0;"></div><div style="position:absolute;left:1003px;top:754px;width:3px;height:169px;background:#a0a0a0;"></div><svg style="left:0;top:755px" width="366" height="170" viewBox="0 755 366 170" shape-rendering="crispEdges"><rect x="29" y="769" width="59" height="45" fill="#000"/><rect x="25.5" y="765.5" width="59" height="45" fill="#fff" stroke="#000"/><rect x="29" y="773" width="10" height="3" rx="1.500" fill="#ff8000" shape-rendering="auto"/><rect x="29" y="787" width="10" height="3" rx="1.500" fill="#d03a10" shape-rendering="auto"/><rect x="29" y="801" width="10" height="3" rx="1.500" fill="#6b5f10" shape-rendering="auto"/><rect x="109" y="763" width="234" height="131" fill="#fff"/><path d="M132.5 763V893" stroke="#5c5c5c" stroke-dasharray="3 3"/><path d="M156.5 763V893" stroke="#5c5c5c" stroke-dasharray="3 3"/><path d="M179.5 763V893" stroke="#5c5c5c" stroke-dasharray="3 3"/><path d="M203.5 763V893" stroke="#5c5c5c" stroke-dasharray="3 3"/><path d="M226.5 763V893" stroke="#5c5c5c" stroke-dasharray="3 3"/><path d="M249.5 763V893" stroke="#5c5c5c" stroke-dasharray="3 3"/><path d="M273.5 763V893" stroke="#5c5c5c" stroke-dasharray="3 3"/><path d="M296.5 763V893" stroke="#5c5c5c" stroke-dasharray="3 3"/><path d="M320.5 763V893" stroke="#5c5c5c" stroke-dasharray="3 3"/><path d="M109 763.5H343" stroke="#000"/><path d="M343.5 763V894" stroke="#000" stroke-dasharray="3 1"/><rect x="108" y="763" width="2" height="132" fill="#000"/><rect x="108" y="893" width="236" height="2" fill="#000"/><rect x="109" y="895" width="1" height="4" fill="#000"/><rect x="132" y="895" width="1" height="4" fill="#000"/><rect x="156" y="895" width="1" height="4" fill="#000"/><rect x="179" y="895" width="1" height="4" fill="#000"/><rect x="203" y="895" width="1" height="4" fill="#000"/><rect x="226" y="895" width="1" height="4" fill="#000"/><rect x="249" y="895" width="1" height="4" fill="#000"/><rect x="273" y="895" width="1" height="4" fill="#000"/><rect x="296" y="895" width="1" height="4" fill="#000"/><rect x="320" y="895" width="1" height="4" fill="#000"/><rect x="343" y="895" width="1" height="4" fill="#000"/><rect x="109" y="895" width="1" height="2" fill="#777"/><rect x="115" y="895" width="1" height="2" fill="#777"/><rect x="121" y="895" width="1" height="2" fill="#777"/><rect x="127" y="895" width="1" height="2" fill="#777"/><rect x="132" y="895" width="1" height="2" fill="#777"/><rect x="138" y="895" width="1" height="2" fill="#777"/><rect x="144" y="895" width="1" height="2" fill="#777"/><rect x="150" y="895" width="1" height="2" fill="#777"/><rect x="156" y="895" width="1" height="2" fill="#777"/><rect x="162" y="895" width="1" height="2" fill="#777"/><rect x="168" y="895" width="1" height="2" fill="#777"/><rect x="173" y="895" width="1" height="2" fill="#777"/><rect x="179" y="895" width="1" height="2" fill="#777"/><rect x="185" y="895" width="1" height="2" fill="#777"/><rect x="191" y="895" width="1" height="2" fill="#777"/><rect x="197" y="895" width="1" height="2" fill="#777"/><rect x="203" y="895" width="1" height="2" fill="#777"/><rect x="208" y="895" width="1" height="2" fill="#777"/><rect x="214" y="895" width="1" height="2" fill="#777"/><rect x="220" y="895" width="1" height="2" fill="#777"/><rect x="226" y="895" width="1" height="2" fill="#777"/><rect x="232" y="895" width="1" height="2" fill="#777"/><rect x="238" y="895" width="1" height="2" fill="#777"/><rect x="244" y="895" width="1" height="2" fill="#777"/><rect x="249" y="895" width="1" height="2" fill="#777"/><rect x="255" y="895" width="1" height="2" fill="#777"/><rect x="261" y="895" width="1" height="2" fill="#777"/><rect x="267" y="895" width="1" height="2" fill="#777"/><rect x="273" y="895" width="1" height="2" fill="#777"/><rect x="279" y="895" width="1" height="2" fill="#777"/><rect x="284" y="895" width="1" height="2" fill="#777"/><rect x="290" y="895" width="1" height="2" fill="#777"/><rect x="296" y="895" width="1" height="2" fill="#777"/><rect x="302" y="895" width="1" height="2" fill="#777"/><rect x="308" y="895" width="1" height="2" fill="#777"/><rect x="314" y="895" width="1" height="2" fill="#777"/><rect x="320" y="895" width="1" height="2" fill="#777"/><rect x="325" y="895" width="1" height="2" fill="#777"/><rect x="331" y="895" width="1" height="2" fill="#777"/><rect x="337" y="895" width="1" height="2" fill="#777"/><rect x="105" y="769" width="3" height="1" fill="#666"/><rect x="105" y="888" width="3" height="1" fill="#666"/><rect x="107" y="799" width="1" height="1" fill="#777"/><rect x="107" y="829" width="1" height="1" fill="#777"/><rect x="107" y="859" width="1" height="1" fill="#777"/><rect x="109" y="768" width="234" height="3" fill="#ff8000"/><rect x="109" y="828" width="234" height="3" fill="#d03a10"/><rect x="109" y="887" width="234" height="3" fill="#6b5f10"/></svg><span class="t" style="left:42.00px;top:766.66px;font-size:10.67px;line-height:14.67px;color:#000;">Series 0</span><span class="t" style="left:42.00px;top:780.66px;font-size:10.67px;line-height:14.67px;color:#000;">Series 1</span><span class="t" style="left:42.00px;top:794.66px;font-size:10.67px;line-height:14.67px;color:#000;">Series 2</span><span class="t" style="left:97.06px;top:762.16px;font-size:10.67px;line-height:14.67px;color:#000;">0</span><span class="t" style="left:97.06px;top:881.16px;font-size:10.67px;line-height:14.67px;color:#000;">1</span><span class="t" style="left:106.53px;top:900.16px;font-size:10.67px;line-height:14.67px;color:#000;">0</span><span class="t" style="left:129.53px;top:900.16px;font-size:10.67px;line-height:14.67px;color:#000;">1</span><span class="t" style="left:153.53px;top:900.16px;font-size:10.67px;line-height:14.67px;color:#000;">2</span><span class="t" style="left:176.53px;top:900.16px;font-size:10.67px;line-height:14.67px;color:#000;">3</span><span class="t" style="left:200.53px;top:900.16px;font-size:10.67px;line-height:14.67px;color:#000;">4</span><span class="t" style="left:223.53px;top:900.16px;font-size:10.67px;line-height:14.67px;color:#000;">5</span><span class="t" style="left:246.53px;top:900.16px;font-size:10.67px;line-height:14.67px;color:#000;">6</span><span class="t" style="left:270.53px;top:900.16px;font-size:10.67px;line-height:14.67px;color:#000;">7</span><span class="t" style="left:293.53px;top:900.16px;font-size:10.67px;line-height:14.67px;color:#000;">8</span><span class="t" style="left:317.53px;top:900.16px;font-size:10.67px;line-height:14.67px;color:#000;">9</span><span class="t" style="left:337.57px;top:900.16px;font-size:10.67px;line-height:14.67px;color:#000;">10</span><svg style="left:366px;top:755px" width="640" height="170" viewBox="366 755 640 170" shape-rendering="crispEdges"><path d="M459.5 783V892" stroke="#757575" stroke-dasharray="3 3"/><rect x="459" y="894" width="1" height="4" fill="#555"/><path d="M495.5 783V892" stroke="#757575" stroke-dasharray="3 3"/><rect x="495" y="894" width="1" height="4" fill="#555"/><path d="M530.5 783V892" stroke="#757575" stroke-dasharray="3 3"/><rect x="530" y="894" width="1" height="4" fill="#555"/><path d="M566.5 783V892" stroke="#757575" stroke-dasharray="3 3"/><rect x="566" y="894" width="1" height="4" fill="#555"/><path d="M601.5 783V892" stroke="#757575" stroke-dasharray="3 3"/><rect x="601" y="894" width="1" height="4" fill="#555"/><path d="M637.5 783V892" stroke="#757575" stroke-dasharray="3 3"/><rect x="637" y="894" width="1" height="4" fill="#555"/><path d="M672.5 783V892" stroke="#757575" stroke-dasharray="3 3"/><rect x="672" y="894" width="1" height="4" fill="#555"/><path d="M707.5 783V892" stroke="#757575" stroke-dasharray="3 3"/><rect x="707" y="894" width="1" height="4" fill="#555"/><path d="M743.5 783V892" stroke="#757575" stroke-dasharray="3 3"/><rect x="743" y="894" width="1" height="4" fill="#555"/><path d="M778.5 783V892" stroke="#757575" stroke-dasharray="3 3"/><rect x="778" y="894" width="1" height="4" fill="#555"/><path d="M814.5 783V892" stroke="#757575" stroke-dasharray="3 3"/><rect x="814" y="894" width="1" height="4" fill="#555"/><path d="M849.5 783V892" stroke="#757575" stroke-dasharray="3 3"/><rect x="849" y="894" width="1" height="4" fill="#555"/><path d="M885.5 783V892" stroke="#757575" stroke-dasharray="3 3"/><rect x="885" y="894" width="1" height="4" fill="#555"/><path d="M920.5 783V892" stroke="#757575" stroke-dasharray="3 3"/><rect x="920" y="894" width="1" height="4" fill="#555"/><rect x="451" y="894" width="1" height="2" fill="#666"/><rect x="468" y="894" width="1" height="2" fill="#666"/><rect x="477" y="894" width="1" height="2" fill="#666"/><rect x="486" y="894" width="1" height="2" fill="#666"/><rect x="504" y="894" width="1" height="2" fill="#666"/><rect x="513" y="894" width="1" height="2" fill="#666"/><rect x="521" y="894" width="1" height="2" fill="#666"/><rect x="539" y="894" width="1" height="2" fill="#666"/><rect x="548" y="894" width="1" height="2" fill="#666"/><rect x="557" y="894" width="1" height="2" fill="#666"/><rect x="575" y="894" width="1" height="2" fill="#666"/><rect x="583" y="894" width="1" height="2" fill="#666"/><rect x="592" y="894" width="1" height="2" fill="#666"/><rect x="610" y="894" width="1" height="2" fill="#666"/><rect x="619" y="894" width="1" height="2" fill="#666"/><rect x="628" y="894" width="1" height="2" fill="#666"/><rect x="645" y="894" width="1" height="2" fill="#666"/><rect x="654" y="894" width="1" height="2" fill="#666"/><rect x="663" y="894" width="1" height="2" fill="#666"/><rect x="681" y="894" width="1" height="2" fill="#666"/><rect x="690" y="894" width="1" height="2" fill="#666"/><rect x="699" y="894" width="1" height="2" fill="#666"/><rect x="716" y="894" width="1" height="2" fill="#666"/><rect x="725" y="894" width="1" height="2" fill="#666"/><rect x="734" y="894" width="1" height="2" fill="#666"/><rect x="752" y="894" width="1" height="2" fill="#666"/><rect x="761" y="894" width="1" height="2" fill="#666"/><rect x="769" y="894" width="1" height="2" fill="#666"/><rect x="787" y="894" width="1" height="2" fill="#666"/><rect x="796" y="894" width="1" height="2" fill="#666"/><rect x="805" y="894" width="1" height="2" fill="#666"/><rect x="823" y="894" width="1" height="2" fill="#666"/><rect x="831" y="894" width="1" height="2" fill="#666"/><rect x="840" y="894" width="1" height="2" fill="#666"/><rect x="858" y="894" width="1" height="2" fill="#666"/><rect x="867" y="894" width="1" height="2" fill="#666"/><rect x="876" y="894" width="1" height="2" fill="#666"/><rect x="893" y="894" width="1" height="2" fill="#666"/><rect x="902" y="894" width="1" height="2" fill="#666"/><rect x="911" y="894" width="1" height="2" fill="#666"/><path d="M442 881.5H927" stroke="#757575" stroke-dasharray="3 3"/><rect x="437" y="881" width="4" height="1" fill="#666"/><rect x="929" y="881" width="4" height="1" fill="#666"/><path d="M442 865.5H927" stroke="#757575" stroke-dasharray="3 3"/><rect x="437" y="865" width="4" height="1" fill="#666"/><rect x="929" y="865" width="4" height="1" fill="#666"/><path d="M442 849.5H927" stroke="#757575" stroke-dasharray="3 3"/><rect x="437" y="849" width="4" height="1" fill="#666"/><rect x="929" y="849" width="4" height="1" fill="#666"/><path d="M442 833.5H927" stroke="#757575" stroke-dasharray="3 3"/><rect x="437" y="833" width="4" height="1" fill="#666"/><rect x="929" y="833" width="4" height="1" fill="#666"/><path d="M442 817.5H927" stroke="#757575" stroke-dasharray="3 3"/><rect x="437" y="817" width="4" height="1" fill="#666"/><rect x="929" y="817" width="4" height="1" fill="#666"/><path d="M442 801.5H927" stroke="#757575" stroke-dasharray="3 3"/><rect x="437" y="801" width="4" height="1" fill="#666"/><rect x="929" y="801" width="4" height="1" fill="#666"/><path d="M442 785.5H927" stroke="#757575" stroke-dasharray="3 3"/><rect x="437" y="785" width="4" height="1" fill="#666"/><rect x="929" y="785" width="4" height="1" fill="#666"/><rect x="439" y="889" width="2" height="1" fill="#777"/><rect x="929" y="889" width="2" height="1" fill="#777"/><rect x="439" y="885" width="2" height="1" fill="#777"/><rect x="929" y="885" width="2" height="1" fill="#777"/><rect x="439" y="877" width="2" height="1" fill="#777"/><rect x="929" y="877" width="2" height="1" fill="#777"/><rect x="439" y="873" width="2" height="1" fill="#777"/><rect x="929" y="873" width="2" height="1" fill="#777"/><rect x="439" y="869" width="2" height="1" fill="#777"/><rect x="929" y="869" width="2" height="1" fill="#777"/><rect x="439" y="861" width="2" height="1" fill="#777"/><rect x="929" y="861" width="2" height="1" fill="#777"/><rect x="439" y="857" width="2" height="1" fill="#777"/><rect x="929" y="857" width="2" height="1" fill="#777"/><rect x="439" y="853" width="2" height="1" fill="#777"/><rect x="929" y="853" width="2" height="1" fill="#777"/><rect x="439" y="845" width="2" height="1" fill="#777"/><rect x="929" y="845" width="2" height="1" fill="#777"/><rect x="439" y="841" width="2" height="1" fill="#777"/><rect x="929" y="841" width="2" height="1" fill="#777"/><rect x="439" y="837" width="2" height="1" fill="#777"/><rect x="929" y="837" width="2" height="1" fill="#777"/><rect x="439" y="829" width="2" height="1" fill="#777"/><rect x="929" y="829" width="2" height="1" fill="#777"/><rect x="439" y="825" width="2" height="1" fill="#777"/><rect x="929" y="825" width="2" height="1" fill="#777"/><rect x="439" y="821" width="2" height="1" fill="#777"/><rect x="929" y="821" width="2" height="1" fill="#777"/><rect x="439" y="813" width="2" height="1" fill="#777"/><rect x="929" y="813" width="2" height="1" fill="#777"/><rect x="439" y="809" width="2" height="1" fill="#777"/><rect x="929" y="809" width="2" height="1" fill="#777"/><rect x="439" y="805" width="2" height="1" fill="#777"/><rect x="929" y="805" width="2" height="1" fill="#777"/><rect x="439" y="797" width="2" height="1" fill="#777"/><rect x="929" y="797" width="2" height="1" fill="#777"/><rect x="439" y="793" width="2" height="1" fill="#777"/><rect x="929" y="793" width="2" height="1" fill="#777"/><rect x="439" y="789" width="2" height="1" fill="#777"/><rect x="929" y="789" width="2" height="1" fill="#777"/><rect x="441" y="783" width="2" height="111" fill="#000"/><rect x="441" y="892" width="488" height="2" fill="#000"/><rect x="442" y="783" width="487" height="1" fill="#000"/><rect x="927" y="783" width="2" height="111" fill="#000"/></svg><span class="t" style="left:430.06px;top:874.16px;font-size:10.67px;line-height:14.67px;color:#000;">0</span><span class="t" style="left:935.00px;top:874.16px;font-size:10.67px;line-height:14.67px;color:#000;">0</span><span class="t" style="left:418.22px;top:858.16px;font-size:10.67px;line-height:14.67px;color:#000;">200</span><span class="t" style="left:935.00px;top:858.16px;font-size:10.67px;line-height:14.67px;color:#000;">200</span><span class="t" style="left:418.22px;top:842.16px;font-size:10.67px;line-height:14.67px;color:#000;">400</span><span class="t" style="left:935.00px;top:842.16px;font-size:10.67px;line-height:14.67px;color:#000;">400</span><span class="t" style="left:418.22px;top:826.16px;font-size:10.67px;line-height:14.67px;color:#000;">600</span><span class="t" style="left:935.00px;top:826.16px;font-size:10.67px;line-height:14.67px;color:#000;">600</span><span class="t" style="left:418.22px;top:810.16px;font-size:10.67px;line-height:14.67px;color:#000;">800</span><span class="t" style="left:935.00px;top:810.16px;font-size:10.67px;line-height:14.67px;color:#000;">800</span><span class="t" style="left:409.33px;top:794.16px;font-size:10.67px;line-height:14.67px;color:#000;">1 000</span><span class="t" style="left:935.00px;top:794.16px;font-size:10.67px;line-height:14.67px;color:#000;">1 000</span><span class="t" style="left:409.33px;top:778.16px;font-size:10.67px;line-height:14.67px;color:#000;">1 200</span><span class="t" style="left:935.00px;top:778.16px;font-size:10.67px;line-height:14.67px;color:#000;">1 200</span><span class="t" style="left:448.84px;top:899.16px;font-size:10.67px;line-height:14.67px;color:#000;">-100</span><span class="t" style="left:492.53px;top:899.16px;font-size:10.67px;line-height:14.67px;color:#000;">0</span><span class="t" style="left:521.61px;top:899.16px;font-size:10.67px;line-height:14.67px;color:#000;">100</span><span class="t" style="left:557.61px;top:899.16px;font-size:10.67px;line-height:14.67px;color:#000;">200</span><span class="t" style="left:592.61px;top:899.16px;font-size:10.67px;line-height:14.67px;color:#000;">300</span><span class="t" style="left:628.61px;top:899.16px;font-size:10.67px;line-height:14.67px;color:#000;">400</span><span class="t" style="left:663.61px;top:899.16px;font-size:10.67px;line-height:14.67px;color:#000;">500</span><span class="t" style="left:698.61px;top:899.16px;font-size:10.67px;line-height:14.67px;color:#000;">600</span><span class="t" style="left:734.61px;top:899.16px;font-size:10.67px;line-height:14.67px;color:#000;">700</span><span class="t" style="left:769.61px;top:899.16px;font-size:10.67px;line-height:14.67px;color:#000;">800</span><span class="t" style="left:805.61px;top:899.16px;font-size:10.67px;line-height:14.67px;color:#000;">900</span><span class="t" style="left:836.16px;top:899.16px;font-size:10.67px;line-height:14.67px;color:#000;">1 000</span><span class="t" style="left:872.16px;top:899.16px;font-size:10.67px;line-height:14.67px;color:#000;">1 100</span><span class="t" style="left:907.16px;top:899.16px;font-size:10.67px;line-height:14.67px;color:#000;">1 200</span><span class="t" style="left:398.45px;top:830.66px;font-size:10.67px;line-height:14.67px;color:#333;">Y</span><span class="t" style="left:964.45px;top:830.66px;font-size:10.67px;line-height:14.67px;color:#333;">Y</span><span class="t" style="left:488.48px;top:867.66px;font-size:10.67px;line-height:14.67px;color:#333;">A1</span><span class="t" style="left:513.48px;top:867.66px;font-size:10.67px;line-height:14.67px;color:#333;">B1</span><span class="t" style="left:501.19px;top:862.66px;font-size:10.67px;line-height:14.67px;color:#000;">C1</span><div style="position:absolute;left:482px;top:879px;width:25px;height:5px;background:#000;border-radius:2.5px;"></div><div style="position:absolute;left:485px;top:880px;width:19px;height:3px;background:#fff000;border-radius:1px;"></div><div style="position:absolute;left:509px;top:879px;width:25px;height:5px;background:#000;border-radius:2.5px;"></div><div style="position:absolute;left:512px;top:880px;width:19px;height:3px;background:#008a00;border-radius:1px;"></div><div style="position:absolute;left:495px;top:874px;width:25px;height:5px;background:#000;border-radius:2.5px;"></div><div style="position:absolute;left:498px;top:875px;width:19px;height:3px;background:#ff1010;border-radius:1px;"></div><span class="t" style="left:665.48px;top:867.66px;font-size:10.67px;line-height:14.67px;color:#333;">A2</span><span class="t" style="left:690.48px;top:867.66px;font-size:10.67px;line-height:14.67px;color:#333;">B2</span><span class="t" style="left:678.19px;top:862.66px;font-size:10.67px;line-height:14.67px;color:#000;">C2</span><div style="position:absolute;left:659px;top:879px;width:25px;height:5px;background:#000;border-radius:2.5px;"></div><div style="position:absolute;left:662px;top:880px;width:19px;height:3px;background:#fff000;border-radius:1px;"></div><div style="position:absolute;left:686px;top:879px;width:25px;height:5px;background:#000;border-radius:2.5px;"></div><div style="position:absolute;left:689px;top:880px;width:19px;height:3px;background:#008a00;border-radius:1px;"></div><div style="position:absolute;left:672px;top:874px;width:25px;height:5px;background:#000;border-radius:2.5px;"></div><div style="position:absolute;left:675px;top:875px;width:19px;height:3px;background:#ff1010;border-radius:1px;"></div><span class="t" style="left:842.48px;top:867.66px;font-size:10.67px;line-height:14.67px;color:#333;">A3</span><span class="t" style="left:867.48px;top:867.66px;font-size:10.67px;line-height:14.67px;color:#333;">B3</span><span class="t" style="left:855.19px;top:862.66px;font-size:10.67px;line-height:14.67px;color:#000;">C3</span><div style="position:absolute;left:836px;top:879px;width:25px;height:5px;background:#000;border-radius:2.5px;"></div><div style="position:absolute;left:839px;top:880px;width:19px;height:3px;background:#fff000;border-radius:1px;"></div><div style="position:absolute;left:863px;top:879px;width:25px;height:5px;background:#000;border-radius:2.5px;"></div><div style="position:absolute;left:866px;top:880px;width:19px;height:3px;background:#008a00;border-radius:1px;"></div><div style="position:absolute;left:849px;top:874px;width:25px;height:5px;background:#000;border-radius:2.5px;"></div><div style="position:absolute;left:852px;top:875px;width:19px;height:3px;background:#ff1010;border-radius:1px;"></div><div style="position:absolute;left:1px;top:923px;width:1008px;height:4px;background:linear-gradient(#8fb4e8,#b8d2f6 60%,#9dbdee);"></div><div style="position:absolute;left:1px;top:927px;width:1008px;height:1px;background:#7f9cc8;"></div><div style="position:absolute;left:2px;top:928px;width:1006px;height:19px;background:linear-gradient(#e9f0fb 0%,#dce7f6 40%,#c9daf0 75%,#c4d6ee 100%);"></div><div style="position:absolute;left:1px;top:928px;width:1px;height:19px;background:#8aa6d0;"></div><div style="position:absolute;left:1008px;top:928px;width:1px;height:19px;background:#8aa6d0;"></div><div style="position:absolute;left:0px;top:947px;width:1010px;height:2px;background:linear-gradient(#a0a0a0,#707070);"></div><div style="position:absolute;left:130px;top:929px;width:1px;height:18px;background:#9db3d2;box-shadow:1px 0 0 #edf3fb;"></div><div style="position:absolute;left:182px;top:929px;width:1px;height:18px;background:#9db3d2;box-shadow:1px 0 0 #edf3fb;"></div><div style="position:absolute;left:222px;top:929px;width:1px;height:18px;background:#9db3d2;box-shadow:1px 0 0 #edf3fb;"></div><div style="position:absolute;left:300px;top:929px;width:1px;height:18px;background:#9db3d2;box-shadow:1px 0 0 #edf3fb;"></div><div style="position:absolute;left:622px;top:929px;width:1px;height:18px;background:#9db3d2;box-shadow:1px 0 0 #edf3fb;"></div><div style="position:absolute;left:702px;top:929px;width:1px;height:18px;background:#9db3d2;box-shadow:1px 0 0 #edf3fb;"></div><div style="position:absolute;left:786px;top:929px;width:1px;height:18px;background:#9db3d2;box-shadow:1px 0 0 #edf3fb;"></div><span class="t" style="left:135.00px;top:930.00px;font-size:11px;line-height:15px;color:#222;letter-spacing:-0.031px;">Ok</span><span class="t" style="left:187.00px;top:930.00px;font-size:11px;line-height:15px;color:#222;letter-spacing:0.188px;">NU...</span><span class="t" style="left:227.00px;top:930.00px;font-size:11px;line-height:15px;color:#222;letter-spacing:0.521px;">13:24:07</span><span class="t" style="left:304.00px;top:930.00px;font-size:11px;line-height:15px;color:#222;letter-spacing:0.015px;">C:\PRES120\Tasks\Task1.pd</span><div style="position:absolute;left:804px;top:928px;width:40px;height:19px;border:1px solid #a7bbd6;border-bottom:none;box-sizing:border-box;background:linear-gradient(#eef3fb,#d6e3f3);border-radius:2px 2px 0 0;"></div><span class="t" style="left:808.50px;top:929.25px;font-size:12.5px;line-height:16.5px;color:#1a1a1a;letter-spacing:-0.496px;">140%</span><div style="position:absolute;left:937px;top:929px;width:1px;height:18px;background:#b4c6e0;"></div><svg style="left:846px;top:928px" width="162" height="20" viewBox="846 928 162 20"><defs><linearGradient id="zb" x1="0" y1="0" x2="0" y2="1"><stop offset="0" stop-color="#ffffff"/><stop offset="1" stop-color="#c4d6ee"/></linearGradient></defs><circle cx="854.5" cy="937.800" r="6.300" fill="url(#zb)" stroke="#5f7396" stroke-width="1.200"/><path d="M851.300 937.800h6.400" stroke="#4a5f85" stroke-width="2"/><circle cx="998.800" cy="937.800" r="6.300" fill="url(#zb)" stroke="#5f7396" stroke-width="1.200"/><path d="M995.600 937.800h6.400M998.800 934.600v6.400" stroke="#4a5f85" stroke-width="2"/><path d="M864 937.500H988" stroke="#5a6a84" shape-rendering="crispEdges"/><path d="M868.5 934V941" stroke="#5a6a84" shape-rendering="crispEdges"/><path d="M888.5 934V941" stroke="#5a6a84" shape-rendering="crispEdges"/><path d="M928.5 934V941" stroke="#5a6a84" shape-rendering="crispEdges"/><path d="M948.5 934V941" stroke="#5a6a84" shape-rendering="crispEdges"/><path d="M968.5 934V941" stroke="#5a6a84" shape-rendering="crispEdges"/><path d="M904.500 934.500l3.500-3.500 3.500 3.500v8.500l-3.500 3.500-3.500-3.500z" fill="#f4f8fe" stroke="#3f4f6c" stroke-width="1.100"/><path d="M907.500 934.500h1v8.500h-1z" fill="none" stroke="#7a8aa8" stroke-width="0.800"/></svg>
</body></html>
